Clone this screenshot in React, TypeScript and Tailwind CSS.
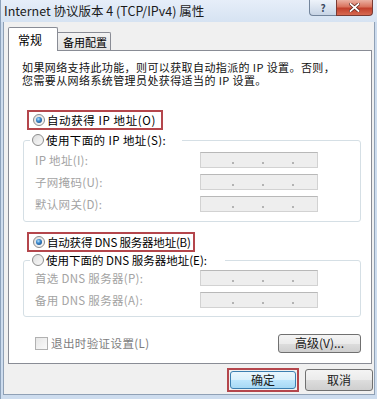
import React from 'react';

const cjk = "font-['Noto_Sans_CJK_SC','Liberation_Sans',sans-serif]";

function Radio({ checked }: { checked?: boolean }) {
    return (
        <svg width="12" height="12" viewBox="0 0 12 12" className="shrink-0">
            <defs>
                <linearGradient id="radioBg" x1="0" y1="0" x2="1" y2="1">
                    <stop offset="0" stopColor="#dcdcdc" />
                    <stop offset="1" stopColor="#fbfbfb" />
                </linearGradient>
                <radialGradient id="radioDot" cx="0.4" cy="0.35" r="0.75">
                    <stop offset="0" stopColor="#b9e2fb" />
                    <stop offset="0.45" stopColor="#3b8bd0" />
                    <stop offset="1" stopColor="#1c4f8a" />
                </radialGradient>
            </defs>
            <circle cx="6" cy="6" r="5.5" fill="url(#radioBg)" stroke="#8c8c8c" />
            {checked && <circle cx="6" cy="6" r="3" fill="url(#radioDot)" />}
        </svg>
    );
}

function IpBox() {
    return (
        <div className="w-[118px] h-[16px] bg-[#eeeeee] border border-[#d2d2d2] border-t-[#b8b8b8] flex items-end pb-[3px] pl-[31px] gap-[28px]">
            <span className="w-[2px] h-[2px] bg-[#b3b3b3]" />
            <span className="w-[2px] h-[2px] bg-[#b3b3b3]" />
            <span className="w-[2px] h-[2px] bg-[#b3b3b3]" />
        </div>
    );
}

function FieldRow({ label }: { label: string }) {
    return (
        <div className="flex items-center">
            <span className="w-[170px] pl-[5px] whitespace-nowrap text-[11.5px] leading-[14px] tracking-[0.3px] text-[#a3a3a3]">{label}</span>
            <IpBox />
        </div>
    );
}

function WinButton({ children, primary, className }: { children: React.ReactNode; primary?: boolean; className?: string }) {
    return (
        <div
            className={
                'flex items-center justify-center rounded-[3px] border text-[12px] leading-none whitespace-nowrap text-[#1a1a1a] ' +
                (primary
                    ? 'border-[#3c7fb1] bg-[linear-gradient(to_bottom,#eaf6fd_0%,#d9f0fc_50%,#bee6fd_50%,#a7d9f5_100%)] '
                    : 'border-[#707070] bg-[linear-gradient(to_bottom,#f4f4f4_0%,#ebebeb_50%,#dddddd_50%,#cfcfcf_100%)] ') +
                (className ?? '')
            }
        >
            {children}
        </div>
    );
}

export default function App() {
    return (
        <div className={`w-[377px] h-[399px] overflow-hidden flex flex-col bg-[#cddcee] border-l border-[#8da2bb] ${cjk}`}>
            {/* title bar */}
            <div className="h-[22px] flex items-start bg-[linear-gradient(to_bottom,#e6eef9,#d6e3f2)]">
                <span className="pl-[3px] pt-[3px] whitespace-nowrap text-[12.5px] leading-[15px] text-[#1b1b1b]">
                    Internet 协议版本 4 (TCP/IPv4) 属性
                </span>
                <div className="ml-auto mr-[4px] flex">
                    <div className="w-[27px] h-[16px] rounded-bl-[4px] border border-t-0 border-r-0 border-[#73859c] bg-[linear-gradient(to_bottom,#eef3fa,#c7d4e5)] flex items-center justify-center text-[10px] font-bold leading-none text-[#3a4a60]">
                        ?
                    </div>
                    <div className="w-[37px] h-[16px] rounded-br-[4px] border border-t-0 border-[#7a3b33] bg-[linear-gradient(to_bottom,#ebb1a3_0%,#d9735e_45%,#c2402c_55%,#d66a52_100%)] flex items-center justify-center">
                        <svg width="11" height="9" viewBox="0 0 11 9">
                            <path d="M1.5 1 L9.5 8 M9.5 1 L1.5 8" stroke="#5a2018" strokeWidth="3.2" strokeLinecap="square" />
                            <path d="M1.5 1 L9.5 8 M9.5 1 L1.5 8" stroke="#ffffff" strokeWidth="1.8" strokeLinecap="square" />
                        </svg>
                    </div>
                </div>
            </div>

            {/* window body */}
            <div className="ml-[2px] mr-[2px] h-[373px] bg-[#f0f0f0] border border-t-0 border-[#8fa0b5] flex flex-col">
                {/* tabs */}
                <div className="mt-[5px] ml-[4px] h-[24px] flex items-end relative z-10 -mb-px">
                    <div className="w-[50px] h-[24px] bg-white border border-b-0 border-[#898c95] rounded-t-[2px] pl-[9px] pt-[5px] whitespace-nowrap text-[12px] leading-[14px] text-black">
                        常规
                    </div>
                    <div className="w-[53px] h-[18px] mb-px border border-l-0 border-b-0 border-[#898c95] rounded-tr-[2px] bg-[linear-gradient(to_bottom,#f3f3f3,#e3e3e3)] pl-[5px] pt-[3px] whitespace-nowrap text-[11px] leading-[13px] text-black">
                        备用配置
                    </div>
                </div>

                {/* tab panel */}
                <div className="ml-[4px] w-[364px] h-[314px] bg-white border border-[#898c95] flex flex-col text-black">
                    <p className="pt-[10px] pl-[13px] whitespace-nowrap text-[11px] leading-[13px] tracking-[0.4px] text-[#111]">
                        如果网络支持此功能，则可以获取自动指派的 IP 设置。否则，
                        <br />
                        您需要从网络系统管理员处获得适当的 IP 设置。
                    </p>

                    <div className="mt-[23px] ml-[18px] w-[136px] h-[20px] border-2 border-[#b4464c] flex items-center pl-[4px] gap-[2px]">
                        <Radio checked />
                        <span className="whitespace-nowrap text-[11.5px] leading-[14px] tracking-[0.6px]">自动获得 IP 地址(O)</span>
                    </div>

                    <fieldset className="mt-[3px] ml-[14px] w-[338px] border border-[#d5dfe5] rounded-[3px] pl-[6px] pb-[9px]">
                        <legend className="pl-[2px] pr-[16px] h-[14px] flex items-center gap-[2px]">
                            <Radio />
                            <span className="whitespace-nowrap text-[11.5px] leading-[14px] tracking-[0.4px]">使用下面的 IP 地址(S):</span>
                        </legend>
                        <div className="pt-[5px] flex flex-col gap-[6px]">
                            <FieldRow label="IP 地址(I):" />
                            <FieldRow label="子网掩码(U):" />
                            <FieldRow label="默认网关(D):" />
                        </div>
                    </fieldset>

                    <div className="mt-[10px] ml-[18px] w-[168px] h-[20px] border-2 border-[#b4464c] flex items-center pl-[4px] gap-[2px]">
                        <Radio checked />
                        <span className="whitespace-nowrap text-[11.5px] leading-[14px] tracking-[-0.2px]">自动获得 DNS 服务器地址(B)</span>
                    </div>

                    <fieldset className="mt-[1px] ml-[14px] w-[338px] border border-[#d5dfe5] rounded-[3px] pl-[6px] pb-[8px]">
                        <legend className="pl-[2px] pr-[18px] h-[14px] flex items-center gap-[2px]">
                            <Radio />
                            <span className="whitespace-nowrap text-[11.5px] leading-[14px]">使用下面的 DNS 服务器地址(E):</span>
                        </legend>
                        <div className="pt-[3px] flex flex-col gap-[6px]">
                            <FieldRow label="首选 DNS 服务器(P):" />
                            <FieldRow label="备用 DNS 服务器(A):" />
                        </div>
                    </fieldset>

                    <div className="mt-[16px] ml-[26px] mr-[10px] h-[20px] flex items-center">
                        <span className="w-[13px] h-[13px] border border-[#b1b1b1] bg-[linear-gradient(135deg,#e6e6e6,#fafafa)]" />
                        <span className="ml-[3px] whitespace-nowrap text-[11.5px] leading-[14px] tracking-[0.4px] text-[#7d7d7d]">退出时验证设置(L)</span>
                        <WinButton className="ml-auto w-[83px] h-[19px]">高级(V)...</WinButton>
                    </div>
                </div>

                {/* dialog buttons */}
                <div className="mt-[4px] mr-[1px] flex justify-end items-center gap-[6px]">
                    <div className="w-[72px] h-[24px] border-2 border-[#b4464c] p-[1px]">
                        <WinButton primary className="w-full h-full">确定</WinButton>
                    </div>
                    <WinButton className="w-[68px] h-[22px]">取消</WinButton>
                </div>
            </div>
        </div>
    );
}
